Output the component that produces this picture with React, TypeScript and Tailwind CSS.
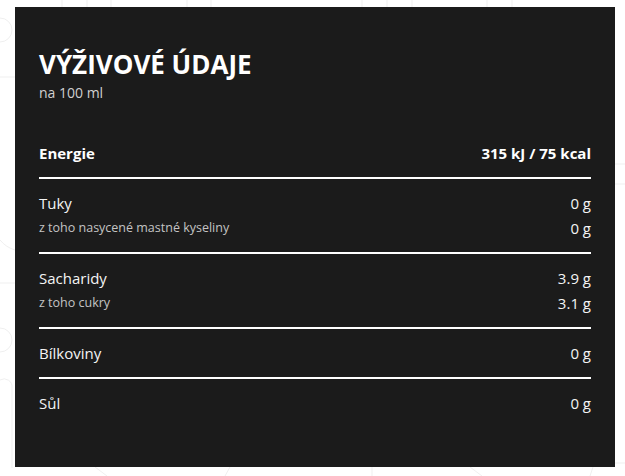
import React from 'react';

type Row = { label: string; value: string; sub?: boolean };

const groups: Row[][] = [
  [
    { label: 'Tuky', value: '0 g' },
    { label: 'z toho nasycené mastné kyseliny', value: '0 g', sub: true },
  ],
  [
    { label: 'Sacharidy', value: '3.9 g' },
    { label: 'z toho cukry', value: '3.1 g', sub: true },
  ],
  [{ label: 'Bílkoviny', value: '0 g' }],
  [{ label: 'Sůl', value: '0 g' }],
];

const Backdrop: React.FC = () => (
  <svg className="absolute inset-0 h-full w-full" viewBox="0 0 625 476" fill="none" stroke="#efefef" strokeWidth={1}>
    <path d="M62 0v7M87 0v7M111 0v7M187 0v7M211 0v7M362 0v7M387 0v7M412 0v7M487 0v7M512 0v7" />
    <path d="M0 77h15M0 283h15M615 164h10M615 184h10M615 463h10" />
    <circle cx="0" cy="30" r="12" />
    <circle cx="0" cy="340" r="12" />
    <path d="M0 240a30 30 0 0 0 15 10M0 380a8 8 0 0 1 12 8v80" />
    <path d="M95 467l12 9M225 476l5-9M372 467v9M470 467l12 9M590 476l3-9" />
  </svg>
);

const NutritionRow: React.FC<{ row: Row }> = ({ row }) => (
  <div className="flex h-6 items-center justify-between">
    <span className={row.sub ? 'text-[12.5px] text-[#c4c4c4]' : 'text-[15px] text-[#f4f4f4]'}>{row.label}</span>
    <span className="text-[15px] text-[#f4f4f4]">{row.value}</span>
  </div>
);

export default function App() {
  return (
    <div className="relative min-h-screen bg-white pl-[15px] pt-[7px]" style={{ fontFamily: '"Open Sans", "Noto Sans", sans-serif' }}>
      <Backdrop />
      <div className="relative h-[460px] w-[600px] bg-[#1b1b1b] px-6 pt-[41px]">
        <h2 className="text-[26px] font-bold leading-8 text-white">VÝŽIVOVÉ ÚDAJE</h2>
        <p className="mt-[3px] text-sm leading-5 text-[#d0d0d0]">na 100 ml</p>

        <div className="mt-[26px] box-content flex h-6 items-center justify-between border-b-2 border-white pb-3 pt-3">
          <span className="text-[15px] font-bold text-white">Energie</span>
          <span className="text-[15px] font-bold text-white">315 kJ / 75 kcal</span>
        </div>

        {groups.map((g, i) => (
          <div
            key={i}
            className={`flex flex-col gap-px py-3 ${i < groups.length - 1 ? 'border-b-2 border-white' : ''}`}
          >
            {g.map((r) => (
              <NutritionRow key={r.label} row={r} />
            ))}
          </div>
        ))}
      </div>
    </div>
  );
}
